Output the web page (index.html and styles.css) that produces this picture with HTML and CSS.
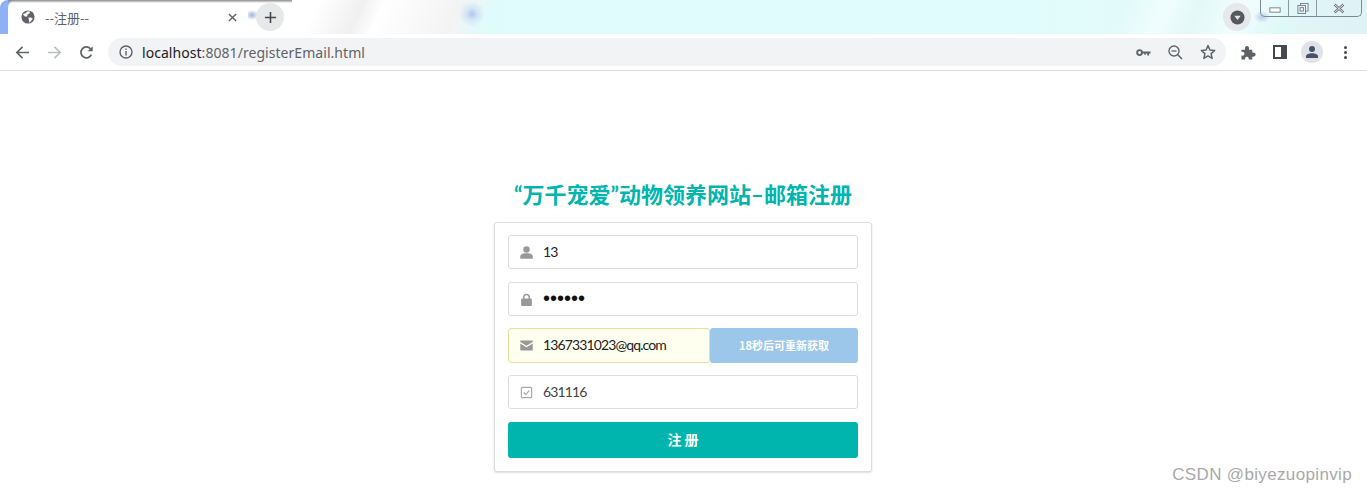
FILE: index.html
```html
<!DOCTYPE html>
<html lang="zh-CN">
<head>
  <meta charset="UTF-8">
  <title>--注册--</title>
  <link rel="stylesheet" href="styles.css">
</head>
<body>
  <div class="chrome">
    <div class="tabstrip">
      <div class="tab">
        <svg class="tab-globe" viewBox="0 0 16 16"><circle cx="8" cy="8" r="7.5" fill="#5f6368"/><path d="M2.5 4.5 5.5 3.5 7.5 1.5 10.5 2 9.5 4 7.5 5 7 7.5 4.5 7.5 2.5 5.5ZM8.5 8.5 11.5 8.5 13.5 10 11.5 12.5 9.5 14.5 9 11.5Z" fill="#fff"/></svg>
        <span class="tab-title">--注册--</span>
        <svg class="tab-close" viewBox="0 0 10 10"><path d="M1 1 9 9M9 1 1 9" stroke="#5f6368" stroke-width="1.6"/></svg>
      </div>
      <div class="new-tab">
        <svg viewBox="0 0 14 14"><path d="M7 1V13M1 7H13" stroke="#45484c" stroke-width="1.7"/></svg>
      </div>
      <div class="strip-fill"></div>
      <div class="tab-search">
        <svg viewBox="0 0 16 16"><circle cx="8" cy="8" r="7.5" fill="#55585c"/><path d="M4.6 6.2H11.4L8 10.6Z" fill="#e6e8ea"/></svg>
      </div>
      <div class="win-controls">
        <div class="win-btn win-min"><svg viewBox="0 0 14 8"><rect x="1" y="1.5" width="12" height="5" fill="#fff" stroke="#6d7480"/></svg></div>
        <div class="win-btn win-max"><svg viewBox="0 0 13 13"><rect x="3.5" y=".5" width="9" height="9" fill="none" stroke="#6d7480"/><rect x=".5" y="3" width="9" height="9.5" fill="#e4f3f6" stroke="#6d7480"/><rect x="3" y="5.5" width="4" height="4" fill="none" stroke="#6d7480"/></svg></div>
        <div class="win-btn win-close"><svg viewBox="0 0 12 10"><path d="M1.5 1 10.5 9M10.5 1 1.5 9" stroke="#6d7480" stroke-width="2.4"/><path d="M1.5 1 10.5 9M10.5 1 1.5 9" stroke="#fff" stroke-width=".8"/></svg></div>
      </div>
    </div>
    <div class="toolbar">
      <svg class="nav-icon" viewBox="0 0 16 16"><path d="M15 8H2M8 2 2 8 8 14" fill="none" stroke="#5f6368" stroke-width="1.8"/></svg>
      <svg class="nav-icon nav-forward" viewBox="0 0 16 16"><path d="M1 8H14M8 2 14 8 8 14" fill="none" stroke="#bcbec0" stroke-width="1.8"/></svg>
      <svg class="nav-icon" viewBox="0 0 16 16"><path d="M13.2 10.2A5.8 5.8 0 1 1 12.2 4" fill="none" stroke="#5f6368" stroke-width="1.8"/><path d="M14.6 1.2V6.6H9.2Z" fill="#5f6368"/></svg>
      <div class="omnibox">
        <svg class="omni-info" viewBox="0 0 14 14"><circle cx="7" cy="7" r="6" fill="none" stroke="#5f6368" stroke-width="1.4"/><path d="M7 6V10.4M7 3.4V5" stroke="#5f6368" stroke-width="1.4"/></svg>
        <span class="url"><span class="url-host">localhost</span>:8081/registerEmail.html</span>
        <svg class="omni-icon omni-key" viewBox="0 0 16 9"><circle cx="3.8" cy="4.5" r="2.6" fill="none" stroke="#5f6368" stroke-width="2"/><path d="M6.5 3.4H15.5V5.6H14V7.6H12V5.6H10.5V7H8.8V5.6H6.5Z" fill="#5f6368"/></svg>
        <svg class="omni-icon omni-zoom" viewBox="0 0 15 15"><circle cx="6" cy="6" r="5" fill="none" stroke="#5f6368" stroke-width="1.4"/><path d="M9.8 9.8 14 14" stroke="#5f6368" stroke-width="1.6"/><path d="M3.5 6H8.5" stroke="#5f6368" stroke-width="1.3"/></svg>
        <svg class="omni-icon omni-star" viewBox="0 0 16 16"><path d="M8 1.6 9.9 6 14.7 6.4 11.1 9.6 12.1 14.4 8 11.9 3.9 14.4 4.9 9.6 1.3 6.4 6.1 6Z" fill="none" stroke="#5f6368" stroke-width="1.5" stroke-linejoin="round"/></svg>
      </div>
      <svg class="bar-icon bar-puzzle" viewBox="0 0 16 16"><path d="M.5 5H4.2C3.9 2.6 4.8 1 6.4 1S8.9 2.6 8.6 5H12V8C14.2 7.7 15.6 8.6 15.6 10.2S14.2 12.7 12 12.4V15.5H8.2C8.5 13.4 7.8 12.4 6.3 12.4S4.1 13.4 4.4 15.5H.5V11.3C2.6 11.5 3.6 10.8 3.6 9.3S2.6 7 .5 7.3Z" fill="#5f6368"/></svg>
      <svg class="bar-icon bar-panel" viewBox="0 0 14 14"><rect x="1" y="1" width="12" height="12" fill="#fff" stroke="#45484c" stroke-width="2"/><rect x="8" y="1" width="5" height="12" fill="#45484c"/></svg>
      <div class="avatar">
        <svg viewBox="0 0 14 14"><circle cx="7" cy="4" r="3" fill="#46526a"/><path d="M1 13V11.2C1 9.2 4 8.2 7 8.2S13 9.2 13 11.2V13Z" fill="#46526a"/></svg>
      </div>
      <div class="kebab"><i></i><i></i><i></i></div>
    </div>
  </div>

  <main class="page">
    <h1 class="title">“万千宠爱”动物领养网站–邮箱注册</h1>
    <form class="card">
      <div class="field">
        <svg class="field-icon" viewBox="0 0 14 14"><circle cx="7" cy="3.8" r="3.5" fill="#999"/><path d="M.3 13.6V11C.3 9.2 3 8.2 5 7.9H9C11 8.2 13.7 9.2 13.7 11V13.6Z" fill="#999"/></svg>
        <span class="field-text">13</span>
      </div>
      <div class="field field-tight">
        <svg class="field-icon" viewBox="0 0 14 14"><path d="M4 7V4.5A3 3 0 0 1 10 4.5V7" fill="none" stroke="#999" stroke-width="1.6"/><rect x="1.2" y="6" width="11.6" height="8" rx="1" fill="#999"/></svg>
        <span class="field-text field-dots">••••••</span>
      </div>
      <div class="field-row">
        <div class="field field-auto">
          <svg class="field-icon" viewBox="0 0 14 14"><path d="M.3 1.6H13.7V3.2L7 7.2 .3 3.2Z" fill="#999"/><path d="M.3 4.8 7 8.8 13.7 4.8V12.4H.3Z" fill="#999"/></svg>
          <span class="field-text">1367331023@qq.com</span>
        </div>
        <div class="code-btn">18秒后可重新获取</div>
      </div>
      <div class="field">
        <svg class="field-icon" viewBox="0 0 14 14"><rect x="1.5" y="1.5" width="11" height="11" rx="1" fill="none" stroke="#aaa" stroke-width="1.3"/><path d="M4 7 6.2 9.2 10 5" fill="none" stroke="#aaa" stroke-width="1.3"/></svg>
        <span class="field-text field-gray">631116</span>
      </div>
      <div class="submit">注 册</div>
    </form>
  </main>

  <div class="watermark">CSDN @biyezuopinvip</div>
</body>
</html>
```
FILE: styles.css
```css
html, body {
  margin: 0;
  height: 100%;
  background: #fff;
  overflow: hidden;
}

body {
  font-family: "Lato", "Noto Sans CJK SC", sans-serif;
  position: relative;
}

svg {
  display: block;
  flex: none;
}

/* browser top */
.chrome {
  border-bottom: 1px solid #dadce0;
}

.tabstrip {
  height: 34px;
  display: flex;
  position: relative;
  background:
    radial-gradient(ellipse 8px 6px at 1262px 17px, #b9cdec 0, transparent 100%),
    radial-gradient(circle at 472px 14px, #b4c6ee 0, #d5e6f6 6px, transparent 13px),
    radial-gradient(ellipse 7px 5px at 252px 15px, #9fb4d8 0, transparent 100%),
    linear-gradient(115deg, transparent 1020px, #f0fdfd 1060px, #e4f8f8 1090px, #f2fdfd 1130px, #dff9f9 1170px, transparent 1190px),
    linear-gradient(115deg, transparent 290px, #f0f0f0 330px, #fff 350px, #f3f3f3 420px, transparent 450px),
    linear-gradient(90deg, #fff 0, #fff 452px, #e0fbfb 462px, #e0fcfc 1000px, #e4f8f8 1220px, #dff3f7 1367px);
}

/* shadow of a window lying behind the strip */
.tabstrip::before {
  content: "";
  position: absolute;
  left: 8px;
  top: 0;
  width: 284px;
  height: 3px;
  z-index: 1;
  background: linear-gradient(#8a8a8a, rgba(200, 200, 200, 0));
}

.tab {
  width: 240px;
  height: 34px;
  margin-left: 8px;
  box-sizing: border-box;
  padding: 0 0 0 13px;
  background: #fff;
  border-radius: 8px 8px 0 0;
  box-shadow: -8px 0 0 #8fb0f7;
  display: flex;
  align-items: center;
  position: relative;
}

.tab-globe {
  width: 14px;
  height: 14px;
}

.tab-title {
  margin-left: 10px;
  font: 13px "Noto Sans CJK SC", sans-serif;
  color: #5f6368;
}

.tab-close {
  width: 9px;
  height: 9px;
  margin-left: auto;
  margin-right: 11px;
}

.new-tab {
  width: 28px;
  height: 28px;
  margin: 3px 0 0 8px;
  border-radius: 50%;
  background: #e6e8ea;
  display: flex;
  align-items: center;
  justify-content: center;
}

.new-tab svg {
  width: 13px;
  height: 13px;
}

.strip-fill {
  flex: 1;
}

.tab-search {
  width: 28px;
  height: 28px;
  margin: 3px 0 0 0;
  border-radius: 50%;
  background: #e6e8ea;
  display: flex;
  align-items: center;
  justify-content: center;
}

.tab-search svg {
  width: 15px;
  height: 15px;
}

.win-controls {
  width: 102px;
  height: 17px;
  margin: 0 5px 0 9px;
  box-sizing: border-box;
  border: 1px solid #7d8692;
  border-top: 0;
  border-radius: 0 0 5px 5px;
  display: flex;
}

.win-btn {
  display: flex;
  align-items: center;
  justify-content: center;
  border-right: 1px solid #8d96a2;
}

.win-btn svg {
  height: 11px;
  width: 12px;
}

.win-min {
  width: 27px;
}

.win-max {
  width: 27px;
}

.win-close {
  flex: 1;
  border-right: 0;
}

.win-min svg {
  height: 8px;
  margin-top: 3px;
}

.toolbar {
  height: 36px;
  display: flex;
  align-items: center;
  background: #fff;
  padding-left: 15px;
}

.nav-icon {
  width: 15px;
  height: 15px;
  margin-right: 17px;
}

.omnibox {
  width: 1118px;
  height: 28px;
  margin-left: -3px;
  border-radius: 14px;
  background: #f1f3f4;
  display: flex;
  align-items: center;
  padding-left: 11px;
  box-sizing: border-box;
}

.omni-info {
  width: 14px;
  height: 14px;
}

.url {
  margin-left: 9px;
  font: 14px "Noto Sans", sans-serif;
  letter-spacing: 0.05px;
  color: #5f6368;
}

.url-host {
  color: #202124;
}

.omni-icon {
  height: 15px;
  width: 15px;
}

.omni-key {
  margin-left: auto;
  width: 15px;
  height: 9px;
}

.omni-zoom {
  margin-left: 17px;
}

.omni-star {
  margin: 0 10px 0 17px;
  width: 16px;
  height: 16px;
}

.bar-icon {
  width: 15px;
  height: 15px;
}

.bar-puzzle {
  margin-left: 15px;
}

.bar-panel {
  margin-left: 17px;
  width: 14px;
  height: 14px;
}

.avatar {
  width: 22px;
  height: 22px;
  margin-left: 14px;
  border-radius: 50%;
  background: #e1e3e6;
  display: flex;
  align-items: center;
  justify-content: center;
}

.avatar svg {
  width: 14px;
  height: 14px;
}

.kebab {
  margin-left: 21px;
  display: flex;
  flex-direction: column;
  gap: 2px;
}

.kebab i {
  width: 3px;
  height: 3px;
  border-radius: 50%;
  background: #45484c;
}

/* form */
.page {
  display: flex;
  flex-direction: column;
  align-items: center;
  padding: 109px 1px 0 0;
}

.title {
  margin: 0 0 12px;
  font: bold 22px/30px "Lato", "Noto Sans CJK SC", sans-serif;
  color: #00b5ad;
  white-space: nowrap;
}

.card {
  width: 378px;
  height: 250px;
  box-sizing: border-box;
  padding: 12px 13px;
  background: #fff;
  border: 1px solid #ddd;
  border-radius: 3px;
  box-shadow: 0 1px 2px rgba(34, 36, 38, 0.15);
  display: flex;
  flex-direction: column;
}

.field {
  height: 34px;
  margin-bottom: 13px;
  box-sizing: border-box;
  padding-left: 11px;
  border: 1px solid #ddd;
  border-radius: 3px;
  display: flex;
  align-items: center;
  background: #fff;
}

.field-tight {
  margin-bottom: 12px;
}

.field-icon {
  width: 13px;
  height: 13px;
}

.field-text {
  margin-left: 10px;
  padding-bottom: 2px;
  font-size: 14px;
  letter-spacing: -0.88px;
  color: #222;
}

.field-dots {
  color: #111;
  letter-spacing: 0;
  font: 20px/1 "Liberation Sans", sans-serif;
}

.field-gray {
  color: #444;
}

.field-row {
  display: flex;
  height: 35px;
  margin-bottom: 12px;
}

.field-auto {
  flex: 1;
  height: 35px;
  margin: 0;
  background: #fffff0;
  border-color: #e5dfa0;
}

.code-btn {
  width: 148px;
  background: #9cc7ea;
  border-radius: 3px;
  color: #fff;
  font: bold 11px/35px "Noto Sans CJK SC", sans-serif;
  text-align: center;
}

.submit {
  height: 36px;
  background: #00b5ad;
  border-radius: 3px;
  color: #fff;
  font: bold 14px/35px "Noto Sans CJK SC", sans-serif;
  text-align: center;
}

.watermark {
  position: absolute;
  right: 15px;
  top: 465px;
  font: 17px/20px "Liberation Sans", sans-serif;
  color: #a8a8a8;
  letter-spacing: 0.35px;
}
```
